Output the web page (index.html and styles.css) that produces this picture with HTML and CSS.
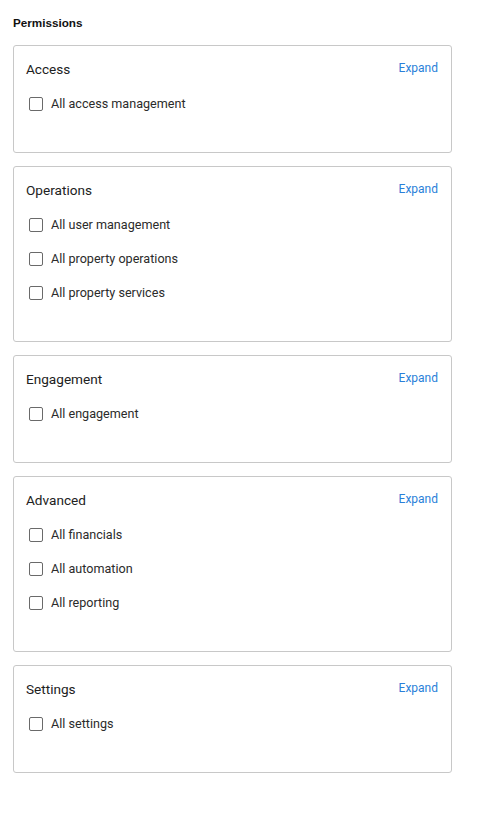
FILE: index.html
```html
<!DOCTYPE html>
<html lang="en">
<head>
    <meta charset="UTF-8">
    <meta name="viewport" content="width=device-width, initial-scale=1.0">
    <title>Permissions</title>
    <link rel="stylesheet" href="styles.css">
</head>
<body>
    <div class="permissions">
        <h3 class="page-title">Permissions</h3>

        <div class="perm-card">
            <div class="perm-head">
                <span class="perm-title">Access</span>
                <a class="expand" href="#">Expand</a>
            </div>
            <label class="perm-item"><input type="checkbox"> All access management</label>
        </div>

        <div class="perm-card">
            <div class="perm-head">
                <span class="perm-title">Operations</span>
                <a class="expand" href="#">Expand</a>
            </div>
            <label class="perm-item"><input type="checkbox"> All user management</label>
            <label class="perm-item"><input type="checkbox"> All property operations</label>
            <label class="perm-item"><input type="checkbox"> All property services</label>
        </div>

        <div class="perm-card">
            <div class="perm-head">
                <span class="perm-title">Engagement</span>
                <a class="expand" href="#">Expand</a>
            </div>
            <label class="perm-item"><input type="checkbox"> All engagement</label>
        </div>

        <div class="perm-card">
            <div class="perm-head">
                <span class="perm-title">Advanced</span>
                <a class="expand" href="#">Expand</a>
            </div>
            <label class="perm-item"><input type="checkbox"> All financials</label>
            <label class="perm-item"><input type="checkbox"> All automation</label>
            <label class="perm-item"><input type="checkbox"> All reporting</label>
        </div>

        <div class="perm-card">
            <div class="perm-head">
                <span class="perm-title">Settings</span>
                <a class="expand" href="#">Expand</a>
            </div>
            <label class="perm-item"><input type="checkbox"> All settings</label>
        </div>
    </div>
</body>
</html>
```

FILE: styles.css
```css
body {
    margin: 0;
    font-family: Roboto, 'Noto Sans', sans-serif;
    background-color: #ffffff;
    color: #212121;
}
.permissions {
    width: 439px;
    padding: 0 13px;
}
.page-title {
    margin: 0;
    padding-top: 16px;
    height: 29px;
    font-family: 'Liberation Sans', Arial, sans-serif;
    font-size: 11.7px;
    font-weight: bold;
    line-height: 14px;
    color: #111;
}
.perm-card {
    border: 1px solid #c8c8c8;
    border-radius: 3px;
    padding: 13px 13px 31px 12px;
    margin-bottom: 13px;
}
.perm-head {
    display: flex;
    justify-content: space-between;
    align-items: flex-start;
    margin-bottom: 8px;
}
.perm-title {
    font-size: 13.6px;
    line-height: 20px;
    color: #212121;
}
.expand {
    font-size: 12px;
    line-height: 18px;
    color: #2a7fd9;
    text-decoration: none;
}
.perm-item {
    display: flex;
    align-items: center;
    height: 34px;
    font-size: 12.6px;
    line-height: 18px;
    color: #2b2b2b;
}
.perm-item input {
    appearance: none;
    -webkit-appearance: none;
    width: 14px;
    height: 14px;
    margin: 0 8px 0 3px;
    border: 1px solid #6a6a6a;
    border-radius: 2px;
    background: #fff;
    box-sizing: border-box;
}
```
